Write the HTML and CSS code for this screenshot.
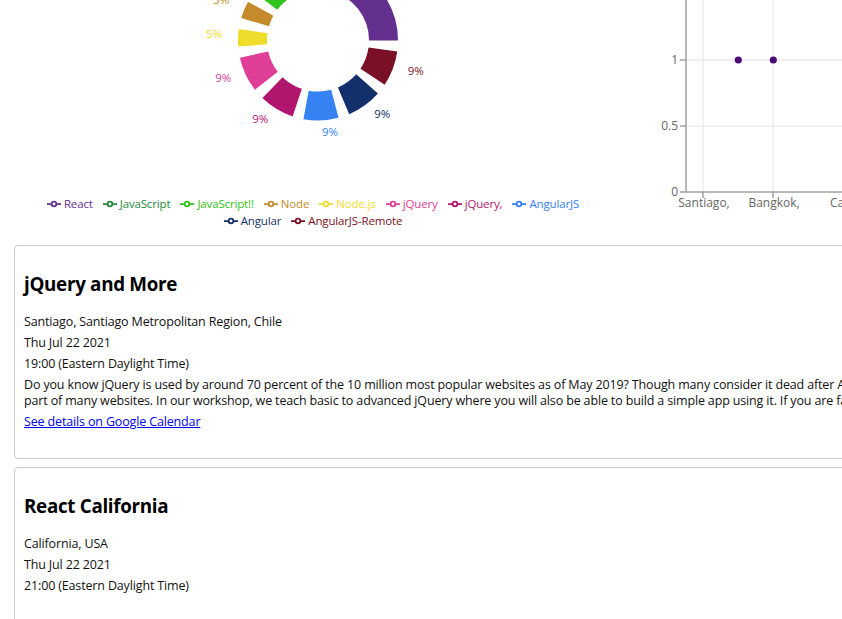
FILE: index.html
```html
<!DOCTYPE html>
<html lang="en">
<head>
<meta charset="utf-8">
<title>Workshops</title>
<link rel="stylesheet" href="styles.css">
</head>
<body>
<div class="page">
  <div class="charts">
    <div class="chart chart-pie">
      <svg class="pie" width="636" height="195" viewBox="0 0 636 195">
        <g fill="none" stroke-width="29">
          <circle cx="318" cy="40.5" r="65.5" stroke="#7a1025" stroke-dasharray="0 9.145 29.094 1000"/>
          <circle cx="318" cy="40.5" r="65.5" stroke="#14306b" stroke-dasharray="0 47.385 29.094 1000"/>
          <circle cx="318" cy="40.5" r="65.5" stroke="#3682f3" stroke-dasharray="0 85.625 29.094 1000"/>
          <circle cx="318" cy="40.5" r="65.5" stroke="#b1166f" stroke-dasharray="0 123.876 29.094 1000"/>
          <circle cx="318" cy="40.5" r="65.5" stroke="#de3e96" stroke-dasharray="0 162.104 29.094 1000"/>
          <circle cx="318" cy="40.5" r="65.5" stroke="#f0dc2c" stroke-dasharray="0 200.401 14.518 1000"/>
          <circle cx="318" cy="40.5" r="65.5" stroke="#c58a2c" stroke-dasharray="0 224.065 14.518 1000"/>
          <circle cx="318" cy="40.5" r="65.5" stroke="#31c320" stroke-dasharray="0 247.729 29.094 1000"/>
          <circle cx="318" cy="40.5" r="65.5" stroke="#238b3b" stroke-dasharray="0 286.026 29.094 1000"/>
          <circle cx="318" cy="40.5" r="65.5" stroke="#64308f" stroke-dasharray="0 324.209 87.340 1000"/>
        </g>
        <g class="pie-labels">
          <text x="407.8" y="74.5" fill="#7a1025">9%</text>
          <text x="374.2" y="118.3" fill="#14306b">9%</text>
          <text x="322" y="136.4" fill="#3682f3">9%</text>
          <text x="268.4" y="122.7" fill="#b1166f" text-anchor="end">9%</text>
          <text x="231.3" y="81.8" fill="#de3e96" text-anchor="end">9%</text>
          <text x="222" y="37.7" fill="#f0dc2c" text-anchor="end">5%</text>
          <text x="229.2" y="4" fill="#c58a2c" text-anchor="end">5%</text>
          <text x="255.6" y="-32.4" fill="#31c320" text-anchor="end">9%</text>
        </g>
      </svg>
      <ul class="legend">
        <li class="legend-item react"><svg class="legend-icon" viewBox="0 0 32 32"><path d="M0,16h10.667A5.333,5.333,0,1,1,21.333,16H32M21.333,16A5.333,5.333,0,1,1,10.667,16"/></svg><span>React</span></li>
        <li class="legend-item js"><svg class="legend-icon" viewBox="0 0 32 32"><path d="M0,16h10.667A5.333,5.333,0,1,1,21.333,16H32M21.333,16A5.333,5.333,0,1,1,10.667,16"/></svg><span>JavaScript</span></li>
        <li class="legend-item jsbang"><svg class="legend-icon" viewBox="0 0 32 32"><path d="M0,16h10.667A5.333,5.333,0,1,1,21.333,16H32M21.333,16A5.333,5.333,0,1,1,10.667,16"/></svg><span>JavaScript!!</span></li>
        <li class="legend-item node"><svg class="legend-icon" viewBox="0 0 32 32"><path d="M0,16h10.667A5.333,5.333,0,1,1,21.333,16H32M21.333,16A5.333,5.333,0,1,1,10.667,16"/></svg><span>Node</span></li>
        <li class="legend-item nodejs"><svg class="legend-icon" viewBox="0 0 32 32"><path d="M0,16h10.667A5.333,5.333,0,1,1,21.333,16H32M21.333,16A5.333,5.333,0,1,1,10.667,16"/></svg><span>Node.js</span></li>
        <li class="legend-item jquery"><svg class="legend-icon" viewBox="0 0 32 32"><path d="M0,16h10.667A5.333,5.333,0,1,1,21.333,16H32M21.333,16A5.333,5.333,0,1,1,10.667,16"/></svg><span>jQuery</span></li>
        <li class="legend-item jquery2"><svg class="legend-icon" viewBox="0 0 32 32"><path d="M0,16h10.667A5.333,5.333,0,1,1,21.333,16H32M21.333,16A5.333,5.333,0,1,1,10.667,16"/></svg><span>jQuery,</span></li>
        <li class="legend-item angularjs"><svg class="legend-icon" viewBox="0 0 32 32"><path d="M0,16h10.667A5.333,5.333,0,1,1,21.333,16H32M21.333,16A5.333,5.333,0,1,1,10.667,16"/></svg><span>AngularJS</span></li>
        <li class="legend-item angular"><svg class="legend-icon" viewBox="0 0 32 32"><path d="M0,16h10.667A5.333,5.333,0,1,1,21.333,16H32M21.333,16A5.333,5.333,0,1,1,10.667,16"/></svg><span>Angular</span></li>
        <li class="legend-item remote"><svg class="legend-icon" viewBox="0 0 32 32"><path d="M0,16h10.667A5.333,5.333,0,1,1,21.333,16H32M21.333,16A5.333,5.333,0,1,1,10.667,16"/></svg><span>AngularJS-Remote</span></li>
      </ul>
    </div>
    <div class="chart chart-scatter">
      <svg class="scatter" width="664" height="215" viewBox="0 0 664 215">
        <g class="grid">
          <line x1="67" y1="-10" x2="67" y2="192"/>
          <line x1="137" y1="-10" x2="137" y2="192"/>
          <line x1="207" y1="-10" x2="207" y2="192"/>
          <line x1="50" y1="60" x2="664" y2="60"/>
          <line x1="50" y1="126" x2="664" y2="126"/>
        </g>
        <g class="axis">
          <line x1="50" y1="-10" x2="50" y2="192"/>
          <line x1="50" y1="192" x2="664" y2="192"/>
          <line x1="44" y1="60" x2="50" y2="60"/>
          <line x1="44" y1="126" x2="50" y2="126"/>
          <line x1="44" y1="192" x2="50" y2="192"/>
          <line x1="67" y1="192" x2="67" y2="198"/>
          <line x1="137" y1="192" x2="137" y2="198"/>
          <line x1="207" y1="192" x2="207" y2="198"/>
        </g>
        <g class="tick-labels">
          <text x="42" y="60" dy="0.355em" text-anchor="end">1</text>
          <text x="42" y="126" dy="0.355em" text-anchor="end">0.5</text>
          <text x="42" y="192" dy="0.355em" text-anchor="end">0</text>
          <text x="68" y="198" dy="0.71em" text-anchor="middle">Santiago,</text>
          <text x="138" y="198" dy="0.71em" text-anchor="middle">Bangkok,</text>
          <text x="194" y="198" dy="0.71em">California,</text>
        </g>
        <g class="dots">
          <circle cx="102.3" cy="60" r="3.6"/>
          <circle cx="137.3" cy="60" r="3.6"/>
        </g>
      </svg>
    </div>
  </div>

  <section class="events">
    <article class="card">
      <h2 class="card-title">jQuery and More</h2>
      <p class="card-line">Santiago, Santiago Metropolitan Region, Chile</p>
      <p class="card-line">Thu Jul 22 2021</p>
      <p class="card-line">19:00 (Eastern Daylight Time)</p>
      <p class="card-line card-desc">Do you know jQuery is used by around 70 percent of the 10 million most popular websites as of May 2019? Though many consider it dead after AngularJS came out, it is still an essential<br>part of many websites. In our workshop, we teach basic to advanced jQuery where you will also be able to build a simple app using it. If you are familiar with HTML and CSS, join us!</p>
      <p class="card-line"><a href="#">See details on Google Calendar</a></p>
    </article>
    <article class="card">
      <h2 class="card-title">React California</h2>
      <p class="card-line">California, USA</p>
      <p class="card-line">Thu Jul 22 2021</p>
      <p class="card-line">21:00 (Eastern Daylight Time)</p>
    </article>
  </section>
</div>
</body>
</html>
```

FILE: styles.css
```css
html, body {
  overflow: hidden;
}

body {
  margin: 0;
  font-family: "Open Sans", "Noto Sans", "Liberation Sans", sans-serif;
  font-size: 12.5px;
  letter-spacing: -0.15px;
  color: #111;
  background: #fff;
}

.page {
  width: 1400px;
}

.charts {
  display: flex;
  height: 229px;
}

.chart-pie {
  width: 636px;
  flex: none;
}

.chart-scatter {
  width: 664px;
  flex: none;
}

.pie,
.scatter {
  display: block;
}

.pie-labels text {
  font-size: 11.5px;
  letter-spacing: 0;
}

.legend {
  list-style: none;
  margin: 0 auto;
  padding: 0;
  width: 580px;
  display: flex;
  flex-wrap: wrap;
  justify-content: center;
  font-size: 11.5px;
  letter-spacing: -0.15px;
  line-height: 17px;
}

.legend-item {
  display: flex;
  align-items: center;
  margin-right: 10px;
}

.legend-icon {
  width: 14px;
  height: 14px;
  margin-right: 3px;
  fill: none;
  stroke: currentColor;
  stroke-width: 4;
}

.react { color: #64308f; }
.js { color: #238b3b; }
.jsbang { color: #31c320; }
.node { color: #c58a2c; }
.nodejs { color: #f0dc2c; }
.jquery { color: #de3e96; }
.jquery2 { color: #b1166f; }
.angularjs { color: #3682f3; }
.angular { color: #14306b; }
.remote { color: #7a1025; }

.grid line {
  stroke: #e2e2e2;
  stroke-width: 1;
}

.axis line {
  stroke: #a0a0a0;
  stroke-width: 1.5;
}

.tick-labels text {
  font-size: 12px;
  letter-spacing: 0;
  fill: #666;
}

.dots circle {
  fill: #4b0c77;
}

.events {
  margin-top: 16px;
  padding: 0 14px;
}

.card {
  border: 1px solid #ccc;
  border-radius: 4px;
  padding: 9px 9px 23px;
  margin-bottom: 8px;
}

.card-title {
  font-size: 18.8px;
  line-height: 26.5px;
  letter-spacing: -0.3px;
  font-weight: 700;
  margin: 16px 0 16px;
  color: #000;
}

.card-line {
  margin: 0 0 4.5px;
  line-height: 16.5px;
}

.card-line a {
  color: #0000ee;
}
```
